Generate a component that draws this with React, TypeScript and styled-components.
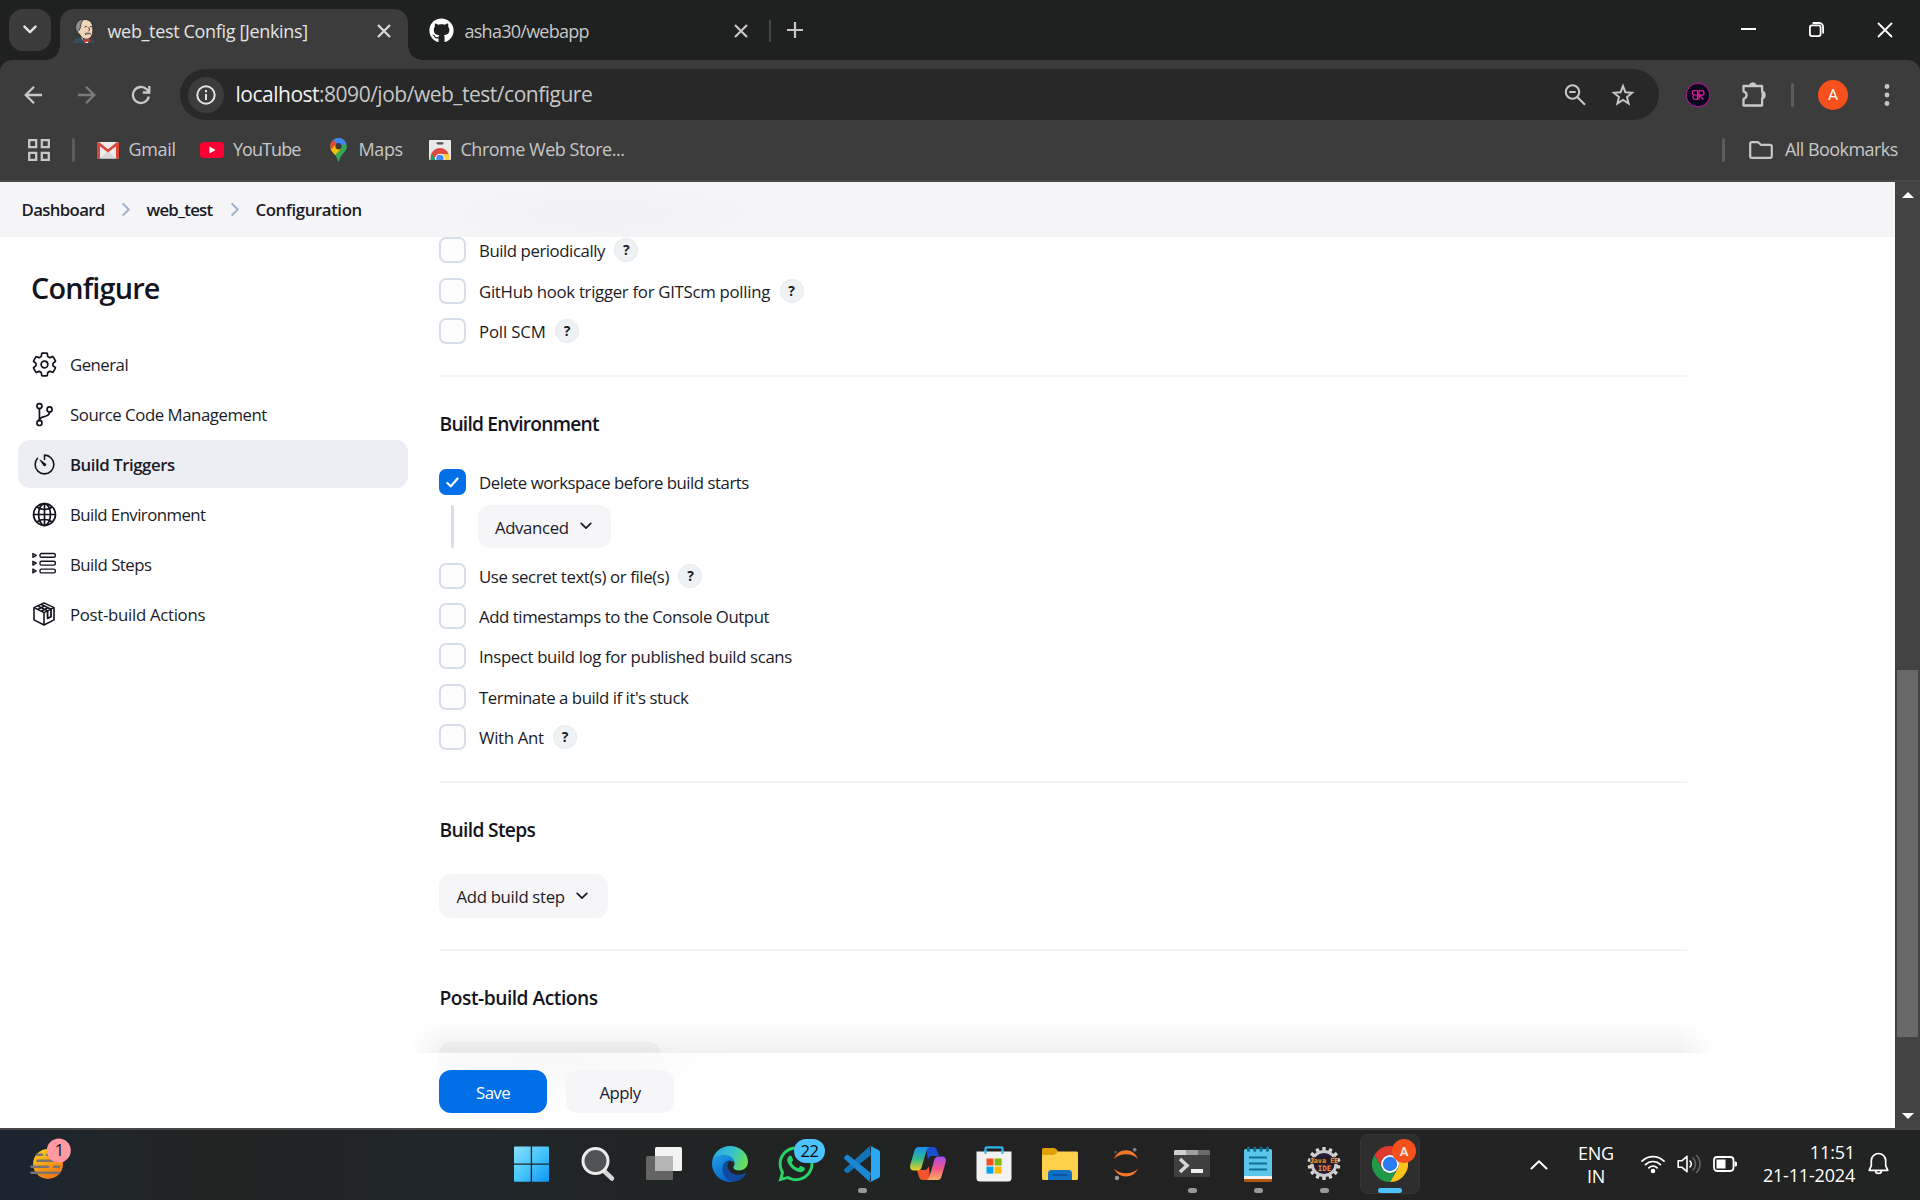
import React from "react";
import styled, { createGlobalStyle, css } from "styled-components";
import { IoSettingsOutline, IoGitBranchOutline, IoGlobeOutline, IoTimerOutline } from "react-icons/io5";
import { FaGithub, FaWhatsapp } from "react-icons/fa";

const GlobalStyle = createGlobalStyle`
  * { box-sizing: border-box; }
  body { margin: 0; overflow: hidden; background: #fff; font-family: "Open Sans", "Noto Sans", sans-serif; }
  svg { display: block; flex: none; }
`;

const Screen = styled.div`
  width: 1920px;
  height: 1200px;
  display: flex;
  flex-direction: column;
  overflow: hidden;
`;

const Txt = styled.span<{ $size?: number; $ls?: number; $w?: number; $c?: string; $top?: number; $bottom?: number }>`
  font-size: ${(p) => p.$size ?? 16.8}px;
  letter-spacing: ${(p) => p.$ls ?? 0}px;
  font-weight: ${(p) => p.$w ?? 400};
  color: ${(p) => p.$c ?? "#1b1b27"};
  padding-top: ${(p) => p.$top ?? 0}px;
  padding-bottom: ${(p) => p.$bottom ?? 0}px;
  white-space: nowrap;
  line-height: 24px;
`;

/* ---------- browser frame ---------- */

const TitleBar = styled.header`
  height: 60px;
  background: #1f2020;
  display: flex;
  padding: 9px 0 0 9px;
`;

const TabSearch = styled.div`
  width: 42px;
  height: 42px;
  border-radius: 14px;
  background: #3b3b3b;
  display: grid;
  place-items: center;
  margin-right: 9px;
`;

const Tab = styled.div<{ $active?: boolean; $width: number }>`
  position: relative;
  width: ${(p) => p.$width}px;
  height: 51px;
  padding: 0 0 8px ${(p) => (p.$active ? 13 : 20.5)}px;
  display: flex;
  align-items: center;
  border-radius: 14px 14px 0 0;
  ${(p) =>
    p.$active &&
    css`
      background: #3c3c3c;
      &::before,
      &::after {
        content: "";
        position: absolute;
        bottom: 0;
        width: 14px;
        height: 14px;
      }
      &::before {
        left: -14px;
        background: radial-gradient(circle at 0 0, transparent 13.5px, #3c3c3c 14px);
      }
      &::after {
        right: -14px;
        background: radial-gradient(circle at 100% 0, transparent 13.5px, #3c3c3c 14px);
      }
    `}
`;

const TabTitle = styled.div<{ $gap: number }>`
  flex: 1;
  display: flex;
  padding: 1px 0 0 ${(p) => p.$gap}px;
`;

const TabClose = styled.div<{ $right: number }>`
  margin-right: ${(p) => p.$right}px;
`;

const TabDivider = styled.div`
  width: 2px;
  height: 22px;
  margin: 11px 16px 0 -1px;
  background: #454545;
`;

const NewTab = styled.div`
  height: 42px;
  display: flex;
  align-items: center;
`;

const WindowButtons = styled.div`
  margin-left: auto;
  height: 41px;
  padding-right: 27px;
  display: flex;
  align-items: center;
  gap: 53px;
`;

const ToolArea = styled.div`
  background: #1f2020;
`;

const ToolRounded = styled.div`
  background: #3c3c3c;
  border-radius: 12px 12px 0 0;
  border-bottom: 2px solid #474747;
  height: 122px;
`;

const NavRow = styled.div`
  height: 69px;
  padding: 9px 0 9px 23px;
  display: flex;
  align-items: center;
`;

const NavIcons = styled.div`
  display: flex;
  gap: 34px;
  width: 157px;
`;

const AddressBar = styled.div`
  width: 1479px;
  height: 51px;
  border-radius: 26px;
  background: #282828;
  display: flex;
  align-items: center;
  padding: 0 24px 0 7.5px;
`;

const InfoBadge = styled.div`
  width: 36px;
  height: 36px;
  border-radius: 50%;
  background: #3c3c3c;
  display: grid;
  place-items: center;
  margin-right: 12px;
`;

const AddressEnd = styled.div`
  margin-left: auto;
  display: flex;
  align-items: center;
  gap: 25px;
`;

const Extensions = styled.div`
  display: flex;
  align-items: center;
  padding-left: 26px;
`;

const ExtensionButton = styled.div<{ $right: number }>`
  margin-right: ${(p) => p.$right}px;
`;

const Rule = styled.div<{ $ml?: number; $mr?: number }>`
  width: 3px;
  height: 24px;
  border-radius: 2px;
  background: #5c5c5c;
  margin-left: ${(p) => p.$ml ?? 0}px;
  margin-right: ${(p) => p.$mr ?? 0}px;
`;

const Avatar = styled.div`
  width: 30px;
  height: 30px;
  border-radius: 50%;
  background: #f6511d;
  color: #fff;
  font: 15.5px/30px Roboto, sans-serif;
  text-align: center;
  margin-right: 36px;
`;

const BookmarkRow = styled.div`
  height: 42px;
  display: flex;
  align-items: center;
  padding: 0 21px 0 28px;
`;

const Bookmark = styled.div<{ $gap: number; $width: number }>`
  display: flex;
  align-items: center;
  gap: ${(p) => p.$gap}px;
  width: ${(p) => p.$width}px;
`;

const BookmarksEnd = styled.div`
  margin-left: auto;
  display: flex;
  align-items: center;
`;

/* ---------- Jenkins page ---------- */

const Viewport = styled.div`
  height: 946px;
  display: flex;
`;

const Page = styled.div`
  width: 1895px;
  background: #fff;
  display: flex;
  flex-direction: column;
`;

const Breadcrumbs = styled.nav`
  height: 55px;
  padding-left: 21.5px;
  display: flex;
  align-items: center;
  background: radial-gradient(170px 34px at 600px 32px, #f2f2f5 20%, transparent 100%), #f5f5f8;
`;

const Crumb = styled.div<{ $width: number }>`
  display: flex;
  width: ${(p) => p.$width}px;
`;

const CrumbArrow = styled.div`
  width: 25px;
  padding-bottom: 1px;
`;

const Columns = styled.div`
  flex: 1;
  min-height: 0;
  display: flex;
`;

const Sidebar = styled.aside`
  width: 439px;
  padding: 35px 31px 0 18px;
`;

const SidebarTitle = styled.h1`
  margin: 0 0 35px;
  padding: 0 0 0 13px;
  height: 33px;
  font-size: 28.8px;
  line-height: 32px;
  font-weight: 600;
  letter-spacing: -0.8px;
  color: #14141f;
`;

const SideItem = styled.div<{ $active?: boolean }>`
  height: 48px;
  margin-bottom: 2px;
  padding-left: 14px;
  display: flex;
  align-items: center;
  gap: 14px;
  border-radius: 12px;
  color: #14141f;
  background: ${(p) => (p.$active ? "#edeef3" : "transparent")};
`;

const SideIcon = styled.div`
  width: 24px;
  height: 24px;
  display: flex;
  align-items: center;
  justify-content: center;
`;

const Main = styled.main`
  width: 1248px;
  display: flex;
  flex-direction: column;
`;

const FormScroll = styled.div`
  height: 816px;
  overflow: hidden;
`;

const Section = styled.section<{ $height: number }>`
  height: ${(p) => p.$height}px;
  border-bottom: 2px solid #f3f3f8;
`;

const LastSection = styled.section``;

const Heading = styled.h2<{ $ls: number; $mb: number }>`
  margin: 0 0 ${(p) => p.$mb}px;
  padding: 34px 0 0 0.5px;
  height: 59px;
  font-size: 19.2px;
  line-height: 26px;
  font-weight: 600;
  letter-spacing: ${(p) => p.$ls}px;
  color: #14141f;
`;

const CheckRow = styled.label`
  height: 26.4px;
  margin-bottom: 13.95px;
  display: flex;
  align-items: center;
  gap: 13px;
`;

const Box = styled.span<{ $on?: boolean }>`
  width: 27px;
  height: 26px;
  border-radius: 7px;
  flex: none;
  display: grid;
  place-items: center;
  background: ${(p) => (p.$on ? "#006fe8" : "#fdfdfe")};
  border: ${(p) => (p.$on ? "none" : "2px solid #d8ddea")};
`;

const Help = styled.span`
  width: 24px;
  height: 24px;
  margin-left: -3.5px;
  border-radius: 50%;
  border: 1px solid #e5eaee;
  background: #eef2f5;
  font-size: 14px;
  line-height: 21px;
  font-weight: 700;
  text-align: center;
  color: #1b1b27;
`;

const Nested = styled.div`
  display: flex;
  height: 43px;
  margin: -4.500px 0 14.500px 12px;
`;

const NestedLine = styled.div`
  width: 3px;
  border-radius: 2px;
  background: #d8deea;
  margin-right: 24px;
`;

const Button = styled.button<{ $width: number; $height?: number; $primary?: boolean; $left?: number }>`
  width: ${(p) => p.$width}px;
  height: ${(p) => p.$height ?? 43}px;
  border: 0;
  border-radius: 12px;
  display: flex;
  align-items: center;
  justify-content: ${(p) => (p.$left ? "flex-start" : "center")};
  gap: 11px;
  padding: 0 0 0 ${(p) => p.$left ?? 0}px;
  font-family: inherit;
  background: ${(p) => (p.$primary ? "#006fe8" : "#f6f6f9")};
`;

const BottomBar = styled.div`
  position: relative;
  height: 75px;
  display: flex;
  align-items: flex-start;
  gap: 19px;
  padding-top: 17px;
  background: radial-gradient(190px 56px at 110px 0, #f7f7f8 0%, transparent 100%);
  &::before {
    content: "";
    position: absolute;
    left: -30px;
    right: -27px;
    top: -33px;
    height: 33px;
    background: linear-gradient(to top, rgba(0, 0, 0, 0.055), transparent);
    mask-image: linear-gradient(to right, transparent, #000 34px, #000 calc(100% - 34px), transparent);
  }
`;

const Scrollbar = styled.div`
  width: 25px;
  background: #424242;
  display: flex;
  flex-direction: column;
  align-items: center;
  padding: 10px 0 9px;
`;

const Arrow = styled.div<{ $down?: boolean }>`
  width: 0;
  height: 0;
  border-left: 6px solid transparent;
  border-right: 6px solid transparent;
  ${(p) => (p.$down ? "border-top: 6px solid #fff;" : "border-bottom: 6px solid #fff;")}
`;

const Thumb = styled.div`
  width: 21px;
  height: 367px;
  margin: 472px 0 auto;
  background: #686868;
`;

/* ---------- taskbar ---------- */

const Taskbar = styled.footer`
  height: 72px;
  border-top: 2px solid #464646;
  background: linear-gradient(90deg, #1b2431 0, #202629 110px, #222323 210px, #20262a 450px, #212424 700px, #222222 1000px, #222323 100%);
  display: flex;
`;

const Weather = styled.div`
  width: 499px;
  padding: 7px 0 0 29px;
`;

const Apps = styled.div`
  display: flex;
`;

const AppSlot = styled.div`
  position: relative;
  width: 66px;
  height: 70px;
  display: flex;
  justify-content: center;
`;

const AppTile = styled.div<{ $active?: boolean }>`
  width: 60px;
  height: 60px;
  margin-top: 4px;
  display: grid;
  place-items: center;
  border-radius: 8px;
  padding-bottom: 1px;
  ${(p) => p.$active && "background:#2e2e2e; border:1px solid #363636;"}
`;

const Indicator = styled.div<{ $active?: boolean }>`
  position: absolute;
  top: 58px;
  width: ${(p) => (p.$active ? 24 : 9)}px;
  height: 5px;
  border-radius: 3px;
  background: ${(p) => (p.$active ? "#4cc2ff" : "#999")};
`;

const CountBadge = styled.div`
  position: absolute;
  left: 31px;
  top: 9px;
  width: 31px;
  height: 24px;
  border-radius: 12px;
  background: #4cc2ff;
  color: #0b0b0b;
  font-size: 16.5px;
  line-height: 24px;
  letter-spacing: -0.5px;
  text-align: center;
`;

const ProfileBadge = styled.div`
  position: absolute;
  left: 35px;
  top: 9px;
  width: 24px;
  height: 24px;
  border-radius: 50%;
  background: #f6511d;
  color: #f6e3dc;
  font: 700 13px/25px Roboto, sans-serif;
  text-align: center;
`;

const Tray = styled.div`
  margin-left: auto;
  width: 390px;
  height: 70px;
  display: flex;
  align-items: center;
`;

const Lines = styled.div<{ $width: number; $align: string; $shift?: number }>`
  width: ${(p) => p.$width}px;
  flex: none;
  display: flex;
  flex-direction: column;
  text-align: ${(p) => p.$align};
  padding-bottom: ${(p) => p.$shift ?? 0}px;
  span { line-height: 23px; }
`;

const TrayIcons = styled.div`
  display: flex;
  gap: 12px;
  margin-left: -3px;
  padding-bottom: 2px;
`;

const BellButton = styled.div`
  padding: 0 0 2px 12.500px;
`;

/* ---------- drawings ---------- */

const Down = ({ w = 12, c = "#1b1b27", sw = 1.8 }: { w?: number; c?: string; sw?: number }) => (
  <svg width={w} height={w * 0.66} viewBox="0 0 12 8" fill="none" stroke={c} strokeWidth={sw} strokeLinecap="round" strokeLinejoin="round">
    <path d="M1.2 1.4 6 6.2l4.8-4.8" />
  </svg>
);

const Cross = ({ s, sw, c }: { s: number; sw: number; c: string }) => (
  <svg width={s} height={s} viewBox={`0 0 ${s} ${s}`} stroke={c} strokeWidth={sw} fill="none">
    <path d={`M1 1 ${s - 1} ${s - 1}M${s - 1} 1 1 ${s - 1}`} />
  </svg>
);

const Butler = () => (
  <svg width="22" height="24" viewBox="0 0 22 24">
    <path d="M0 24c.5-3 2-4.600 5-5l4-1 8 .5c3 .5 4 2.500 4.300 5.500z" fill="#335061" />
    <path d="M8 18.500 12 24h3l2-5.500z" fill="#fff" />
    <path d="M4 13c-2-3-1.500-8 1-10.300C8-.3 15-.6 18 3c2 2.600 2 7 1.800 10-.3 3.500-2.500 7-5.800 7.200C10 20.500 7.500 17.500 6.500 15z" fill="#f0d6b7" stroke="#222" strokeWidth=".9" />
    <path d="M4 12.800C1.500 9.500 2.500 4 5.500 2c2-1.400 4-1.600 5-1.300C9 2.500 7.600 4 7.700 7c0 1.500-.7 2-1.200 4z" fill="#8d8f8f" stroke="#222" strokeWidth=".7" />
    <path d="M11.500 8.200c1-1 2-.8 2.700-.2M16.600 8c.7-.6 1.600-.6 2.400 0M15.800 8.500c.5 2 1 3-.2 3.800M12 15.500c1.500-1 4.500-1 6-.5" stroke="#3a2a20" strokeWidth="1" fill="none" />
    <path d="M11 14.700c1.500-1.500 5-1.700 7-.5l-3 .9z" fill="#777" />
    <path d="m10 19.600 3.500 1.600 3.800-1.900.4 4-3.600-1-3.600 1.600z" fill="#d33833" stroke="#5c1512" strokeWidth=".5" />
  </svg>
);

const PuzzlePiece = () => (
  <svg width="25" height="25" viewBox="0 0 25 25">
    <path d="M2.500 4h18.600v5.400c1.600.5 2.500 1.800 2.500 3.600s-.9 3.100-2.500 3.600v6.900H2.500v-6.700c2-.5 3.100-1.800 3.100-3.700s-1.100-3.200-3.100-3.700z" fill="none" stroke="#c7c7c7" strokeWidth="2.300" strokeLinejoin="round" />
    <path d="M8.500 4a3.300 3.300 0 0 1 6.600 0zM21 9.800a3.300 3.300 0 0 1 0 6.500z" fill="#c7c7c7" stroke="#c7c7c7" />
  </svg>
);

const ChromeLogo = ({ s }: { s: number }) => (
  <svg width={s} height={s} viewBox="0 0 36 36">
    <path d="M2.410 9A18 18 0 0 1 33.590 9H18A9 9 0 0 0 10.200 22.500Z" fill="#df3a2e" />
    <path d="M2.410 9A18 18 0 0 1 33.590 9H18A9 9 0 0 0 10.200 22.500Z" fill="#fcc31a" transform="rotate(120 18 18)" />
    <path d="M2.410 9A18 18 0 0 1 33.590 9H18A9 9 0 0 0 10.200 22.500Z" fill="#209a48" transform="rotate(240 18 18)" />
    <circle cx="18" cy="18" r="9" fill="#fff" />
    <circle cx="18" cy="18" r="7.200" fill="#2c7bf0" />
  </svg>
);

const GmailIcon = () => (
  <svg width="22" height="17" viewBox="0 0 22 17">
    <rect width="22" height="16.500" rx="1.500" fill="#ececec" />
    <path d="M3 16.500 11 9l8 7.500z" fill="#d8d8d8" />
    <path d="M0 1.500V15a1.500 1.500 0 0 0 1.500 1.500H3V4.300l8 6.200 8-6.200v12.200h1.500A1.500 1.500 0 0 0 22 15V1.500C22 .3 20.500-.3 19.300.5L11 7.200 2.700.5C1.500-.3 0 .3 0 1.500z" fill="#dc4437" />
  </svg>
);

const YouTubeIcon = () => (
  <svg width="24" height="16" viewBox="0 0 24 16">
    <rect width="24" height="16" rx="3.500" fill="#ff0033" />
    <path d="M9.500 4.600v6.800L15.500 8z" fill="#fff" />
  </svg>
);

const MapsIcon = () => (
  <svg width="17" height="24" viewBox="0 0 17 24">
    <clipPath id="pin">
      <path d="M8.500 0A8.300 8.300 0 0 0 .2 8.300c0 4 2.600 5.800 4.900 8.700 1.500 2 2.300 4 2.700 5.800.2 1.200 1.200 1.200 1.400 0 .4-1.800 1.200-3.800 2.700-5.800 2.300-2.900 4.900-4.700 4.900-8.700A8.300 8.300 0 0 0 8.500 0z" />
    </clipPath>
    <g clipPath="url(#pin)">
      <rect width="17" height="24" fill="#34a853" />
      <path d="M3 1.500 10-2l8 3-1 5-3.500.5-5 3z" fill="#4285f4" />
      <path d="M0 2h3l5.500 6.300L0 14z" fill="#ea4335" />
      <path d="M-1 13.500 5.500 6.500l5.500 4-7.500 8.500z" fill="#fbbc04" />
    </g>
    <circle cx="8.500" cy="8.200" r="3.100" fill="#3c3c3c" />
  </svg>
);

const WebStoreIcon = () => (
  <svg width="22" height="20" viewBox="0 0 22 20">
    <rect width="22" height="20" rx="1" fill="#e9e9e9" />
    <rect x="7.500" y="2.200" width="7" height="2.200" rx="1.100" fill="#555" />
    <clipPath id="bag"><rect width="22" height="20" rx="1" /></clipPath>
    <g clipPath="url(#bag)">
      <path d="M2 20A9.300 9.300 0 0 1 19.600 14H11z" fill="#dd4b3e" />
      <path d="M1.500 20a9 9 0 0 1 1.600-5.500L7 20z" fill="#1da462" />
      <path d="M11 14h8.700a9 9 0 0 1 .7 6H12z" fill="#ffcd40" />
      <circle cx="11" cy="18.500" r="4.700" fill="#fff" />
      <circle cx="11" cy="18.500" r="3.700" fill="#4a8af4" />
    </g>
  </svg>
);

const StepsIcon = () => (
  <svg width="24" height="24" viewBox="0 0 24 24" fill="none" stroke="#14141f" strokeWidth="1.400" strokeLinejoin="round">
    {[3.4, 11.2, 19].map((y) => (
      <g key={y}>
        <rect x="8" y={y - 1.900} width="15.300" height="3.800" rx="1.400" />
        <path d={`M.9 ${y - 1.900}v3.800l3.300-1.900z`} />
      </g>
    ))}
  </svg>
);

const PackageIcon = () => (
  <svg width="24" height="24" viewBox="0 0 24 24" fill="none" stroke="#14141f" strokeWidth="1.600" strokeLinejoin="round">
    <path d="M12 .9 22 5.600v12.300L12 23 2 17.900V5.600z" />
    <path d="M2 5.600 12 10.600l10-5M12 10.600V23M5.600 3.900l10 5M9 2.300l10 5M5.600 7.500 12 4.300M9 9.200l7-3.400" />
    <path d="M15.600 9v7.400l3.400-1.700V7.200" strokeWidth="1.800" />
  </svg>
);

const WindowsLogo = () => (
  <svg width="36" height="36" viewBox="0.500 0 36 36">
    <defs>
      <linearGradient id="win" x1="0" y1="0" x2="1" y2="1">
        <stop offset="0" stopColor="#8be0ff" /><stop offset=".5" stopColor="#45c6fb" /><stop offset="1" stopColor="#0a95f5" />
      </linearGradient>
    </defs>
    <path fill="url(#win)" d="M1.500.5h15.700v17H.5v-16a1 1 0 0 1 1-1zM18.600.5h15.900a1 1 0 0 1 1 1v16H18.600zM.5 18.800h16.700v17H1.500a1 1 0 0 1-1-1zM18.600 18.800h16.900v16a1 1 0 0 1-1 1H18.600z" />
  </svg>
);

const SearchLogo = () => (
  <svg width="36" height="36" viewBox="0 0 36 36">
    <path d="M23 24 32 32.500" stroke="#d8d8d8" strokeWidth="4.500" strokeLinecap="round" />
    <circle cx="15.500" cy="15" r="12.500" fill="#515253" stroke="#ececec" strokeWidth="3" />
  </svg>
);

const TaskView = () => (
  <svg width="36" height="36" viewBox="0 0 36 36">
    <rect x="9" y="1" width="27" height="24" rx="1.500" fill="#f3f3f3" />
    <rect x="0" y="10" width="27" height="24" rx="1.500" fill="#646464" />
    <rect x="9" y="10" width="18" height="15" fill="#b4b4b4" />
  </svg>
);

const EdgeLogo = () => (
  <svg width="36" height="36" viewBox="0 0 36 36">
    <defs>
      <linearGradient id="e1" x1="0" y1=".3" x2="1" y2=".6"><stop offset="0" stopColor="#2aa5e0" /><stop offset=".5" stopColor="#35c3cf" /><stop offset="1" stopColor="#6ce04e" /></linearGradient>
      <linearGradient id="e2" x1="0" y1="0" x2=".6" y2="1"><stop offset="0" stopColor="#1fa0e8" /><stop offset="1" stopColor="#0a63c9" /></linearGradient>
    </defs>
    <path d="M.3 15C1.600 6.500 8.900 0 18 0c10 0 18 7 18 15.800 0 5.200-3.800 8.700-8.700 8.700-4 0-6-1.500-6-3 0-1.200 1.200-1.700 1.200-4C22.500 13 18 9.500 12.500 9.500 6 9.500 2 12 .3 15z" fill="url(#e1)" />
    <path d="M.3 15C2 11.500 6.500 9.300 12.500 9.300c5.500 0 9.800 3.300 10 8-2-3.600-8-3.500-10.500.5-3 5-.5 14 8.500 18A18 18 0 0 1 .3 15z" fill="url(#e2)" />
    <path d="M20.500 35.800C12 33.500 8.500 24.500 11.500 18.500c1.500-3 4.500-4.500 7-4-6 3.500-2.500 14 7.500 14.300 3.500.1 5.500-.8 7-1.600.8-.4 1.200.2.800.9-2.500 4.500-7.500 7.900-13.300 7.700z" fill="#114a9c" />
  </svg>
);

const CodeLogo = () => (
  <svg width="36" height="36" viewBox="0 0 36 36">
    <path d="M25.500.3 27 9 4.500 26.800c-.8.6-1.500.6-2.200 0L.5 25.200c-.7-.7-.7-1.600 0-2.300z" fill="#1373b8" />
    <path d="M25.500 35.700 27 27 4.500 9.200c-.8-.6-1.500-.6-2.200 0L.5 10.800c-.7.700-.7 1.600 0 2.300z" fill="#1b87d2" />
    <path d="M27 .2 34.600 3.900A2.500 2.500 0 0 1 36 6.100v23.800a2.500 2.500 0 0 1-1.400 2.200L27 35.800c-1 .4-1.500.1-2-.4.900.6 2 .1 2-1.100V1.700c0-1.200-1.100-1.700-2-1.100.5-.6 1.200-.8 2-.4z" fill="#2aa7f3" />
  </svg>
);

const CopilotLogo = () => (
  <svg width="36" height="36" viewBox="0 0 36 36">
    <defs>
      <linearGradient id="c1" x1="0" y1="0" x2="0" y2="1"><stop offset="0" stopColor="#1b8ef0" /><stop offset=".5" stopColor="#2fb98f" /><stop offset="1" stopColor="#f2d21c" /></linearGradient>
      <linearGradient id="c2" x1="0" y1="0" x2="0" y2="1"><stop offset="0" stopColor="#a34cf0" /><stop offset=".5" stopColor="#f0568c" /><stop offset="1" stopColor="#fdae5c" /></linearGradient>
    </defs>
    <path d="M16 1h7c2.500 0 3.500 1.500 4.300 4l1.700 5h-7c-2.500 0-3.500 2-4 4z" fill="#1a4fd0" />
    <path d="M20 34h-7c-2.500 0-3.500-1.500-4.300-4L7 24h8c2 0 3-2 4-4z" fill="#f0542f" />
    <path d="M8.500 1H20c-2 0-3 2-3.600 4l-4.700 16c-.8 2.600-2 3.500-4.500 3.500H4c-3.500 0-4.500-2.500-3.600-6L4.300 5C5.200 2 6.500 1 8.500 1z" fill="url(#c1)" />
    <path d="M27.500 34H16c2 0 3-2 3.600-4l4.700-16c.8-2.600 2-3.500 4.500-3.500H32c3.500 0 4.500 2.500 3.600 6L31.700 30c-.9 3-2.200 4-4.200 4z" fill="url(#c2)" />
  </svg>
);

const StoreLogo = () => (
  <svg width="36" height="36" viewBox="0 0 36 36">
    <path d="M9.500 8V2.600A1.300 1.300 0 0 1 10.800 1.300h14.400a1.300 1.300 0 0 1 1.300 1.300V8" fill="none" stroke="#31b5ec" strokeWidth="2.200" />
    <path d="M.5 5.500h35V32a3.500 3.500 0 0 1-3.500 3.500H4A3.500 3.500 0 0 1 .5 32z" fill="#f2f2f2" />
    <path d="M9.500 4.500V8M26.500 4.500V8" stroke="#31b5ec" strokeWidth="2" />
    <path d="M10.500 12.500h7v7h-7z" fill="#f25022" /><path d="M18.600 12.500h7v7h-7z" fill="#7fba00" />
    <path d="M10.500 20.600h7v7h-7z" fill="#00a4ef" /><path d="M18.600 20.600h7v7h-7z" fill="#ffb900" />
  </svg>
);

const FolderLogo = () => (
  <svg width="36" height="36" viewBox="0 0 36 36">
    <path d="M0 3.500A1.500 1.500 0 0 1 1.500 2h10.300c.8 0 1.400.3 2 .8L16 5v5H0z" fill="#e0a008" />
    <path d="M0 9h11c1.500 0 2-.4 3-1.300L16 5.500h18.500A1.500 1.500 0 0 1 36 7v25.500a1.500 1.500 0 0 1-1.500 1.500h-33A1.500 1.500 0 0 1 0 32.500z" fill="#ffd04c" />
    <path d="M6 34v-6.500A3.500 3.500 0 0 1 9.500 24h17a3.500 3.500 0 0 1 3.500 3.500V34z" fill="#0f70c4" />
    <path d="M10.500 29h15" stroke="#0a4f94" strokeWidth="1.500" />
  </svg>
);

const JupyterLogo = () => (
  <svg width="36" height="36" viewBox="0 0 36 36">
    <path d="M6 13C8.200 7.500 12.700 4.300 18 4.300S27.800 7.500 30 13c-2.500-3-7-4.800-12-4.800S8.500 10 6 13zM6 22.500c2.500 3 7 4.800 12 4.800s9.500-1.800 12-4.800c-2.200 5-6.700 8-12 8s-9.800-3-12-8z" fill="#f37726" />
    <circle cx="26.700" cy="3.700" r="1.900" fill="#7c7c7c" /><circle cx="9" cy="32" r="2.200" fill="#989898" /><circle cx="7.500" cy="6" r="1.200" fill="#616161" />
  </svg>
);

const TerminalLogo = () => (
  <svg width="36" height="36" viewBox="0 0 36 36">
    <rect y="4" width="36" height="27" rx="1.500" fill="#3f3f3f" />
    <path d="M0 9V5.500A1.500 1.500 0 0 1 1.500 4H12v5z" fill="#cfcfcf" /><path d="M12 4h12v5H12z" fill="#a0a0a0" /><path d="M24 4h10.500A1.500 1.500 0 0 1 36 5.500V9H24z" fill="#6b6b6b" />
    <path d="m6 13 7 6.500L6 26" fill="none" stroke="#d5d5d5" strokeWidth="3.600" />
    <rect x="17" y="23" width="12" height="4" fill="#f0f0f0" />
  </svg>
);

const NotepadLogo = () => (
  <svg width="36" height="36" viewBox="0 0 36 36">
    <path d="M4 33h28v1.500a1.500 1.500 0 0 1-1.500 1.500h-25A1.500 1.500 0 0 1 4 34.500z" fill="#b4560e" />
    <path d="M4 29h28v4H4z" fill="#f2f2f2" />
    <path d="M4 4.500A1.500 1.500 0 0 1 5.500 3h25A1.500 1.500 0 0 1 32 4.500V30H4z" fill="#5cc6ea" />
    <path d="M8.500 2.200v2M14.800 2.200v2M21.100 2.200v2M27.400 2.200v2" stroke="#0d6f95" strokeWidth="3.200" strokeLinecap="round" />
    <path d="M9 11.500h18M9 17.500h18M9 23.500h18" stroke="#0f6e92" strokeWidth="2" />
  </svg>
);

const teeth = Array.from({ length: 14 }, (_, i) => (i * 360) / 14);
const JavaIdeLogo = () => (
  <svg width="36" height="36" viewBox="0 0 36 36">
    {teeth.map((a) => (
      <rect key={a} x="16.300" y="1" width="3.400" height="6" rx=".6" fill="#d5d5d5" transform={`rotate(${a} 18 17.500)`} />
    ))}
    <circle cx="18" cy="17.500" r="12" fill="#241c38" stroke="#c9c9c9" strokeWidth="3" />
    <path d="M4 11h28v7H4z" fill="#2a1a1c" fillOpacity=".75" />
    <g fontFamily="DejaVu Sans Mono, monospace" fontWeight="700" fill="#f7902a" textAnchor="middle">
      <text x="18" y="16.800" fontSize="6.800">Java EE</text>
      <text x="18.500" y="24.500" fontSize="7.500">IDE</text>
    </g>
  </svg>
);

const WeatherIcon = () => (
  <svg width="44" height="44" viewBox="0 0 44 44">
    <defs><linearGradient id="sun" x1="0" y1="0" x2=".5" y2="1"><stop offset="0" stopColor="#ffd21f" /><stop offset="1" stopColor="#f2790f" /></linearGradient></defs>
    <circle cx="19" cy="27" r="15" fill="url(#sun)" />
    <path d="M8 17.700h5M18 17.700h6M8.500 23.800h26M2.500 29.800H19M25 29.800h5M2.500 35.800H30" stroke="#7a746f" strokeWidth="2.600" strokeLinecap="round" />
    <circle cx="29.800" cy="13.500" r="12" fill="#ff99a4" />
    <text x="30.500" y="19.300" fontFamily="Open Sans, sans-serif" fontSize="16.500" fill="#111" textAnchor="middle">1</text>
  </svg>
);

/* ---------- composition ---------- */

const Check = ({ label, ls, help, on }: { label: string; ls: number; help?: boolean; on?: boolean }) => (
  <CheckRow>
    <Box $on={on}>
      {on && (
        <svg width="13" height="11" viewBox="0 0 13 11" fill="none" stroke="#fff" strokeWidth="2.200" strokeLinecap="round" strokeLinejoin="round">
          <path d="M1.300 6 4.800 9.300 11.600 1.500" />
        </svg>
      )}
    </Box>
    <Txt $ls={ls} $top={2}>{label}</Txt>
    {help && <Help>?</Help>}
  </CheckRow>
);

const sideItems = [
  { label: "General", ls: -0.52, icon: <IoSettingsOutline size={27} /> },
  { label: "Source Code Management", ls: -0.45, icon: <IoGitBranchOutline size={27} /> },
  { label: "Build Triggers", ls: -0.45, icon: <IoTimerOutline size={25} />, active: true },
  { label: "Build Environment", ls: -0.56, icon: <IoGlobeOutline size={27} /> },
  { label: "Build Steps", ls: -0.51, icon: <StepsIcon /> },
  { label: "Post-build Actions", ls: -0.3, icon: <PackageIcon /> },
];

const apps: { icon: React.ReactNode; open?: boolean; active?: boolean; badge?: React.ReactNode }[] = [
  { icon: <WindowsLogo /> },
  { icon: <SearchLogo /> },
  { icon: <TaskView /> },
  { icon: <EdgeLogo /> },
  { icon: <FaWhatsapp size={40} color="#25d366" />, badge: <CountBadge>22</CountBadge> },
  { icon: <CodeLogo />, open: true },
  { icon: <CopilotLogo /> },
  { icon: <StoreLogo /> },
  { icon: <FolderLogo /> },
  { icon: <JupyterLogo /> },
  { icon: <TerminalLogo />, open: true },
  { icon: <NotepadLogo />, open: true },
  { icon: <JavaIdeLogo />, open: true },
  { icon: <ChromeLogo s={36} />, active: true, badge: <ProfileBadge>A</ProfileBadge> },
];

const CrumbSeparator = () => (
  <CrumbArrow>
    <svg width="8" height="13" viewBox="0 0 8 13" fill="none" stroke="#9db0cb" strokeWidth="1.800" strokeLinecap="round" strokeLinejoin="round">
      <path d="M1.200 1 6.800 6.500 1.200 12" />
    </svg>
  </CrumbArrow>
);

export default function App() {
  return (
    <Screen>
      <GlobalStyle />
      <TitleBar>
        <TabSearch><Down w={14} c="#e3e3e3" sw={2.1} /></TabSearch>
        <Tab $active $width={348}>
          <Butler />
          <TabTitle $gap={12.5}><Txt $size={18} $ls={-0.34} $c="#e3e3e3">web_test Config [Jenkins]</Txt></TabTitle>
          <TabClose $right={17}><Cross s={14} sw={2.2} c="#dcdcdc" /></TabClose>
        </Tab>
        <Tab $width={362}>
          <FaGithub size={25} color="#fff" />
          <TabTitle $gap={11}><Txt $size={18} $ls={-0.74} $c="#c7c7c7">asha30/webapp</Txt></TabTitle>
          <TabClose $right={22}><Cross s={14} sw={2.2} c="#c7c7c7" /></TabClose>
        </Tab>
        <TabDivider />
        <NewTab>
          <svg width="16" height="16" viewBox="0 0 16 16" stroke="#c7c7c7" strokeWidth="2.200"><path d="M8 0v16M0 8h16" /></svg>
        </NewTab>
        <WindowButtons>
          <svg width="15" height="15" viewBox="0 0 15 15"><path d="M0 7h15" stroke="#fff" strokeWidth="2" /></svg>
          <svg width="15" height="15" viewBox="0 0 15 15" fill="none" stroke="#fff" strokeWidth="1.800">
            <rect x=".9" y="3.400" width="10.700" height="10.700" rx="2" />
            <path d="M3.600 1h6.400a4.100 4.100 0 0 1 4.100 4.100v6.400" />
          </svg>
          <Cross s={16} sw={1.8} c="#fff" />
        </WindowButtons>
      </TitleBar>

      <ToolArea>
        <ToolRounded>
          <NavRow>
            <NavIcons>
              <svg width="20" height="20" viewBox="0 0 20 20" fill="none" stroke="#c7c7c7" strokeWidth="2.300"><path d="M19 10H3M11 1.700 2.700 10l8.300 8.300" /></svg>
              <svg width="20" height="20" viewBox="0 0 20 20" fill="none" stroke="#7b7b7b" strokeWidth="2.300"><path d="M1 10h16M9 1.700l8.300 8.300L9 18.300" /></svg>
              <svg width="20" height="20" viewBox="0 0 20 20" fill="none" stroke="#c7c7c7" strokeWidth="2.300"><path d="M17.800 11.500A8 8 0 1 1 15.500 4.200L18 6.700" /><path d="M18.300 1v6.500H11.800" /></svg>
            </NavIcons>
            <AddressBar>
              <InfoBadge>
                <svg width="20" height="20" viewBox="0 0 20 20" fill="none" stroke="#e3e3e3" strokeWidth="2"><circle cx="10" cy="10" r="8.700" /><path d="M10 9v6M10 5v2.200" /></svg>
              </InfoBadge>
              <Txt $size={21} $ls={-0.49} $c="#c7c7c7" $bottom={1}><Txt $size={21} $ls={-0.49} $c="#f2f2f2">localhost</Txt>:8090/job/web_test/configure</Txt>
              <AddressEnd>
                <svg width="22" height="22" viewBox="0 0 22 22" fill="none" stroke="#c7c7c7" strokeWidth="2.100"><circle cx="8.500" cy="8" r="6.700" /><path d="M13.300 13 21 20.700M5.300 8h6.400" /></svg>
                <svg width="24" height="23" viewBox="0 0 24 23" fill="none" stroke="#c7c7c7" strokeWidth="2"><path d="m12 3 2.400 6.200 6.700.5-5.100 4.300 1.600 6.500-5.600-3.500-5.600 3.500L8 14 2.900 9.700l6.700-.5z" /></svg>
              </AddressEnd>
            </AddressBar>
            <Extensions>
              <ExtensionButton $right={30}>
                <svg width="26" height="26" viewBox="0 0 26 26">
                  <circle cx="13" cy="13" r="11.700" fill="#02061a" stroke="#a8128a" strokeWidth="1.200" />
                  <path d="M12.500 8.600H9.400a2.200 2.200 0 0 0 0 4.400h3.100M12.500 13H9.600a2.200 2.200 0 0 0 0 4.300h2.900V8.600M8 13h6.500M14 17.500V8.700h2.800a2.200 2.200 0 0 1 0 4.400H14.500l4 4.400" fill="none" stroke="#e6189a" strokeWidth="1.200" />
                </svg>
              </ExtensionButton>
              <PuzzlePiece />
              <Rule $ml={25} $mr={24} />
              <Avatar>A</Avatar>
              <svg width="6" height="24" viewBox="0 0 6 24" fill="#c7c7c7"><circle cx="3" cy="3.500" r="2.400" /><circle cx="3" cy="12" r="2.400" /><circle cx="3" cy="20.500" r="2.400" /></svg>
            </Extensions>
          </NavRow>
          <BookmarkRow>
            <svg width="22" height="22" viewBox="0 0 22 22" fill="none" stroke="#c7c7c7" strokeWidth="2.300">
              <path d="M1.200 1.200h7v7h-7zM13.800 1.200h7v7h-7zM1.200 13.800h7v7h-7zM13.800 13.800h7v7h-7z" />
            </svg>
            <Rule $ml={22} $mr={22} />
            <Bookmark $gap={9.5} $width={103}><GmailIcon /><Txt $size={18} $ls={-0.32} $c="#c7c7c7" $bottom={2}>Gmail</Txt></Bookmark>
            <Bookmark $gap={9} $width={130}><YouTubeIcon /><Txt $size={18} $ls={-0.95} $c="#c7c7c7" $bottom={2}>YouTube</Txt></Bookmark>
            <Bookmark $gap={11.5} $width={99}><MapsIcon /><Txt $size={18} $ls={-0.4} $c="#c7c7c7" $bottom={2}>Maps</Txt></Bookmark>
            <Bookmark $gap={9.5} $width={200}><WebStoreIcon /><Txt $size={18} $ls={-0.49} $c="#c7c7c7" $bottom={2}>Chrome Web Store...</Txt></Bookmark>
            <BookmarksEnd>
              <Rule $mr={24} />
              <Bookmark $gap={12} $width={150}>
                <svg width="24" height="18" viewBox="0 0 24 18" fill="none" stroke="#c7c7c7" strokeWidth="2.200" strokeLinejoin="round">
                  <path d="M1.200 2.700a1.500 1.500 0 0 1 1.500-1.500h6.500l2.600 2.600h9.500a1.500 1.500 0 0 1 1.500 1.500v10a1.500 1.500 0 0 1-1.500 1.500H2.700a1.500 1.500 0 0 1-1.500-1.500z" />
                </svg>
                <Txt $size={18} $ls={-0.56} $c="#c7c7c7" $bottom={2}>All Bookmarks</Txt>
              </Bookmark>
            </BookmarksEnd>
          </BookmarkRow>
        </ToolRounded>
      </ToolArea>

      <Viewport>
        <Page>
          <Breadcrumbs>
            <Crumb $width={100}><Txt $w={600} $ls={-0.65}>Dashboard</Txt></Crumb>
            <CrumbSeparator />
            <Crumb $width={84}><Txt $w={600} $ls={-0.77}>web_test</Txt></Crumb>
            <CrumbSeparator />
            <Txt $w={600} $ls={-0.4}>Configuration</Txt>
          </Breadcrumbs>
          <Columns>
            <Sidebar>
              <SidebarTitle>Configure</SidebarTitle>
              {sideItems.map((it) => (
                <SideItem key={it.label} $active={it.active}>
                  <SideIcon>{it.icon}</SideIcon>
                  <Txt $ls={it.ls} $w={it.active ? 600 : 400} $top={2}>{it.label}</Txt>
                </SideItem>
              ))}
            </Sidebar>
            <Main>
              <FormScroll>
                <Section $height={140}>
                  <Check label="Build periodically" ls={-0.44} help />
                  <Check label="GitHub hook trigger for GITScm polling" ls={-0.29} help />
                  <Check label="Poll SCM" ls={-0.16} help />
                </Section>
                <Section $height={406}>
                  <Heading $ls={-0.77} $mb={33}>Build Environment</Heading>
                  <Check label="Delete workspace before build starts" ls={-0.48} on />
                  <Nested>
                    <NestedLine />
                    <Button $width={133} $left={17}><Txt $ls={-0.38} $top={3}>Advanced</Txt><Down /></Button>
                  </Nested>
                  <Check label="Use secret text(s) or file(s)" ls={-0.39} help />
                  <Check label="Add timestamps to the Console Output" ls={-0.43} />
                  <Check label="Inspect build log for published build scans" ls={-0.36} />
                  <Check label="Terminate a build if it's stuck" ls={-0.46} />
                  <Check label="With Ant" ls={-0.32} help />
                </Section>
                <Section $height={168}>
                  <Heading $ls={-0.66} $mb={32}>Build Steps</Heading>
                  <Button $width={169} $height={44} $left={17.5}><Txt $ls={-0.33} $top={1}>Add build step</Txt><Down /></Button>
                </Section>
                <LastSection>
                  <Heading $ls={-0.48} $mb={32}>Post-build Actions</Heading>
                  <Button $width={222} />
                </LastSection>
              </FormScroll>
              <BottomBar>
                <Button $width={108} $primary><Txt $ls={-0.6} $c="#fff" $top={2}>Save</Txt></Button>
                <Button $width={108}><Txt $ls={-0.52} $top={2}>Apply</Txt></Button>
              </BottomBar>
            </Main>
          </Columns>
        </Page>
        <Scrollbar>
          <Arrow />
          <Thumb />
          <Arrow $down />
        </Scrollbar>
      </Viewport>

      <Taskbar>
        <Weather><WeatherIcon /></Weather>
        <Apps>
          {apps.map((a, i) => (
            <AppSlot key={i}>
              <AppTile $active={a.active}>{a.icon}</AppTile>
              {a.badge}
              {(a.open || a.active) && <Indicator $active={a.active} />}
            </AppSlot>
          ))}
        </Apps>
        <Tray>
          <svg width="18" height="10" viewBox="0 0 18 10" fill="none" stroke="#fff" strokeWidth="2" strokeLinecap="round" strokeLinejoin="round"><path d="M1.500 8.500 9 1.200l7.500 7.300" /></svg>
          <Lines $width={96} $align="center">
            <Txt $size={18} $ls={-0.28} $c="#fff">ENG</Txt>
            <Txt $size={18} $ls={-0.28} $c="#fff">IN</Txt>
          </Lines>
          <TrayIcons>
            <svg width="24" height="24" viewBox="0 0 24 24" fill="none" stroke="#fff" strokeWidth="1.700" strokeLinecap="round">
              <path d="M1 9.200a15.500 15.500 0 0 1 22 0M4.500 12.600a10.600 10.600 0 0 1 15 0M7.900 15.900a5.800 5.800 0 0 1 8.200 0" /><circle cx="12" cy="19" r="1.400" fill="#fff" />
            </svg>
            <svg width="24" height="24" viewBox="0 0 24 24" fill="none" strokeLinecap="round" strokeLinejoin="round">
              <path d="M1.200 8.800h3.600L10 4.300v15.400l-5.200-4.500H1.200z" stroke="#fff" strokeWidth="1.600" />
              <path d="M13 9a4.600 4.600 0 0 1 0 6" stroke="#fff" strokeWidth="1.600" />
              <path d="M16 6a8.500 8.500 0 0 1 0 12M19.500 3.500a12 12 0 0 1 0 17" stroke="#666" strokeWidth="1.600" />
            </svg>
            <svg width="25" height="24" viewBox="0 0 25 24">
              <rect x="1" y="5" width="19.500" height="14" rx="3.200" fill="none" stroke="#fff" strokeWidth="1.800" />
              <rect x="3.500" y="7.500" width="9" height="9" fill="#fff" /><path d="M21.500 9.500h1a1.500 1.500 0 0 1 1.500 1.500v2a1.500 1.500 0 0 1-1.500 1.500h-1z" fill="#fff" />
            </svg>
          </TrayIcons>
          <Lines $width={117} $align="right" $shift={2}>
            <Txt $size={18} $ls={-0.15} $c="#fff">11:51</Txt>
            <Txt $size={18} $ls={-0.18} $c="#fff">21-11-2024</Txt>
          </Lines>
          <BellButton>
            <svg width="21" height="24" viewBox="0 0 21 24" fill="none" stroke="#fff" strokeWidth="1.700" strokeLinejoin="round">
              <path d="M10.500 1.500A7.200 7.200 0 0 0 3.300 8.700v5L1.200 18.300h18.600l-2.100-4.600v-5a7.200 7.200 0 0 0-7.200-7.200zM7.500 18.500a3 3 0 0 0 6 0" />
            </svg>
          </BellButton>
        </Tray>
      </Taskbar>
    </Screen>
  );
}
